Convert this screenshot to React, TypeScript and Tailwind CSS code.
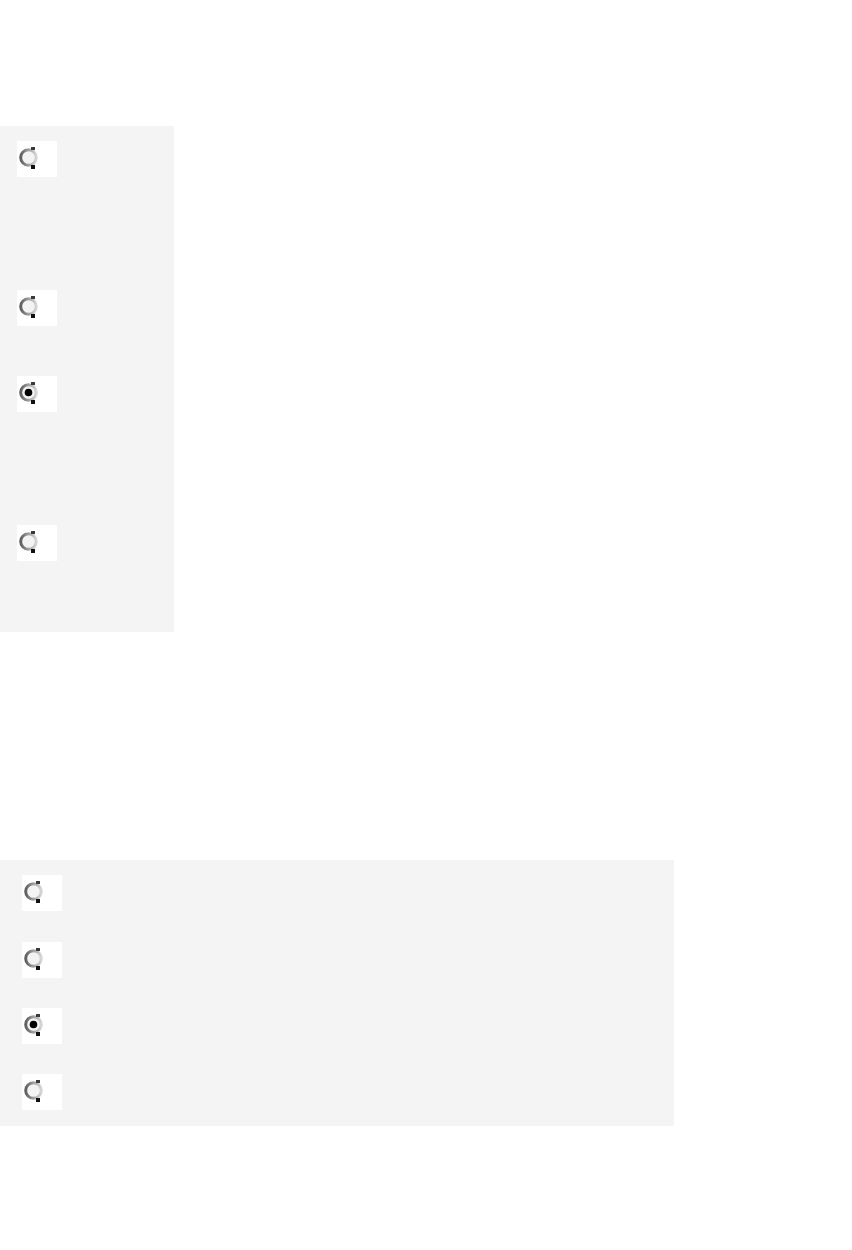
import React from 'react'

interface Option {
  id: string
  checked: boolean
}

const RadioMark: React.FC<{ checked: boolean; uid: string }> = ({ checked, uid }) => {
  return (
    <div className="w-10 h-9 bg-white shrink-0">
      <svg width="40" height="36" viewBox="0 0 40 36">
        <defs>
          <linearGradient id={`ring-${uid}`} x1="0" y1="0" x2="1" y2="0">
            <stop offset="0" stopColor="#5e5e5e" />
            <stop offset="0.45" stopColor="#9a9a9a" />
            <stop offset="1" stopColor="#d6d6d6" />
          </linearGradient>
        </defs>
        <circle cx="11.5" cy="16.5" r="7.8" fill="#f3f3f3" stroke={`url(#ring-${uid})`} strokeWidth="3" />
        <rect x="14" y="6" width="4" height="3" fill="#3a3a3a" />
        <rect x="14" y="24" width="4" height="4" fill="#111" />
        {checked && <circle cx="11.5" cy="16.5" r="3.8" fill="#000" />}
      </svg>
    </div>
  )
}

const sideOptions: Option[] = [
  { id: 'a', checked: false },
  { id: 'b', checked: false },
  { id: 'c', checked: true },
  { id: 'd', checked: false },
]

// item heights taken from the spacing between rows
const sideHeights = ['h-[149px]', 'h-[86px]', 'h-[149px]', 'h-[107px]']

const listOptions: Option[] = [
  { id: 'e', checked: false },
  { id: 'f', checked: false },
  { id: 'g', checked: true },
  { id: 'h', checked: false },
]

const listGaps = ['', 'mt-[31px]', 'mt-[30px]', 'mt-[30px]']

export default function App() {
  return (
    <div className="w-[852px] h-[1250px] bg-white" style={{ fontFamily: '"Liberation Sans", Arial, sans-serif' }}>
      <div className="h-[126px]" />
      <div className="w-[174px] bg-[#f4f4f4] pt-[15px] pl-[17px]">
        {sideOptions.map((o, i) => (
          <div key={o.id} className={sideHeights[i]}>
            <RadioMark checked={o.checked} uid={o.id} />
          </div>
        ))}
      </div>
      <div className="h-[228px]" />
      <div className="w-[674px] bg-[#f4f4f4] pt-[15px] pb-[16px] pl-[22px] flex flex-col">
        {listOptions.map((o, i) => (
          <div key={o.id} className={listGaps[i]}>
            <RadioMark checked={o.checked} uid={o.id} />
          </div>
        ))}
      </div>
    </div>
  )
}
